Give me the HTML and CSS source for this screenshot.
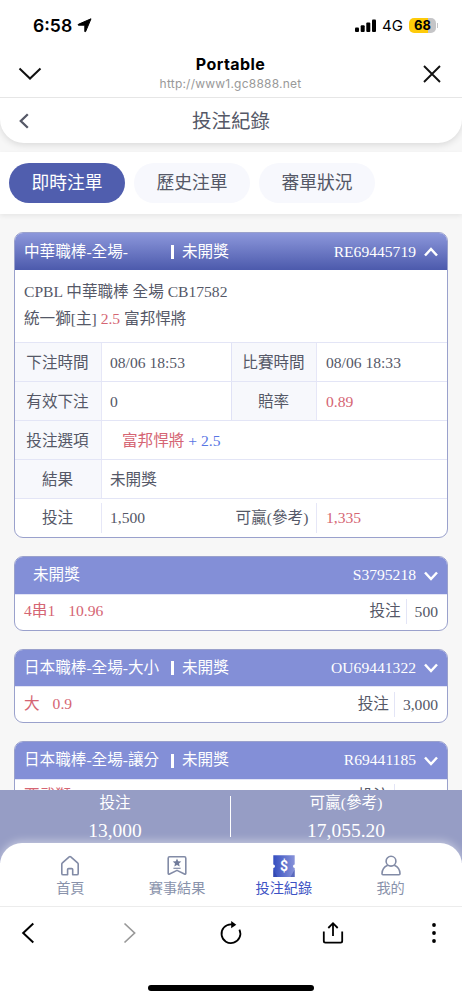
FILE: index.html
```html
<!DOCTYPE html>
<html lang="zh-Hant">
<head>
<meta charset="utf-8">
<meta name="viewport" content="width=device-width, initial-scale=1">
<title>投注紀錄</title>
<link rel="stylesheet" href="styles.css">
</head>
<body>
<div class="screen">
  <div class="status">
    <div class="status-time">6:58
      <svg width="15" height="15" viewBox="0 0 15 15"><path d="M14 .8 8.6 13.6Q8.2 14.3 7.8 13.5V7.2H1.5Q.4 6.9 1.4 6.3Z" fill="#000" stroke="#000" stroke-width="1" stroke-linejoin="round"/></svg>
    </div>
    <div class="status-right">
      <svg width="22" height="14" viewBox="0 0 22 14"><rect x="0" y="8.5" width="4" height="4.5" rx="1"/><rect x="5.7" y="6.2" width="4" height="6.8" rx="1"/><rect x="11.3" y="3.5" width="4" height="9.5" rx="1"/><rect x="17" y="0.5" width="4" height="12.5" rx="1"/></svg>
      <span class="network">4G</span>
      <span class="battery">68</span><span class="battery-tip"></span>
    </div>
  </div>

  <div class="browser-head">
    <svg width="24" height="14" viewBox="0 0 24 14"><path d="M1.5 1.5 12 11.5 22.5 1.5" fill="none" stroke="#111" stroke-width="2"/></svg>
    <div class="site">
      <div class="site-name">Portable</div>
      <div class="site-url">http://www1.gc8888.net</div>
    </div>
    <svg width="18" height="18" viewBox="0 0 18 18"><path d="M1 1 17 17M17 1 1 17" fill="none" stroke="#111" stroke-width="1.9"/></svg>
  </div>

  <div class="page">
    <header class="page-head">
      <svg class="back" width="10" height="16" viewBox="0 0 10 16"><path d="M8.8 1.2 1.8 8 8.8 14.8" fill="none" stroke="#555867" stroke-width="2.3"/></svg>
      <h1>投注紀錄</h1>
    </header>

    <nav class="tabs">
      <a class="tab active">即時注單</a>
      <a class="tab">歷史注單</a>
      <a class="tab">審單狀況</a>
    </nav>

    <main class="list">
      <section class="card open">
        <div class="card-head"><span class="league">中華職棒-全場-</span><i class="bar"></i><span>未開獎</span><span class="serial">RE69445719</span>
          <svg width="14" height="10" viewBox="0 0 14 10"><path d="M1 8.5 7 2 13 8.5" fill="none" stroke="#fff" stroke-width="2.5"/></svg></div>
        <div class="match">
          <p>CPBL 中華職棒 全場 CB17582</p>
          <p>統一獅[主] <span class="red">2.5</span> 富邦悍將</p>
        </div>
        <div class="row"><span class="label">下注時間</span><span class="value half">08/06 18:53</span><span class="label second">比賽時間</span><span class="value">08/06 18:33</span></div>
        <div class="row"><span class="label">有效下注</span><span class="value half">0</span><span class="label second">賠率</span><span class="value red">0.89</span></div>
        <div class="row"><span class="label">投注選項</span><span class="value pick"><span class="red">富邦悍將</span> <span class="blue">+ 2.5</span></span></div>
        <div class="row"><span class="label">結果</span><span class="value">未開獎</span></div>
        <div class="row total"><span class="label">投注</span><span class="value half">1,500</span><span class="label second">可贏(參考)</span><span class="value red">1,335</span></div>
      </section>

      <section class="card">
        <div class="card-head"><span class="solo">未開獎</span><span class="serial">S3795218</span>
          <svg width="14" height="10" viewBox="0 0 14 10"><path d="M1 1.5 7 8 13 1.5" fill="none" stroke="#fff" stroke-width="2.5"/></svg></div>
        <div class="brief"><span class="red">4串1</span><span class="red odds">10.96</span><span class="stake">投注</span><span class="amount">500</span></div>
      </section>

      <section class="card">
        <div class="card-head"><span class="league">日本職棒-全場-大小</span><i class="bar"></i><span>未開獎</span><span class="serial">OU69441322</span>
          <svg width="14" height="10" viewBox="0 0 14 10"><path d="M1 1.5 7 8 13 1.5" fill="none" stroke="#fff" stroke-width="2.5"/></svg></div>
        <div class="brief"><span class="red">大</span><span class="red odds">0.9</span><span class="stake">投注</span><span class="amount">3,000</span></div>
      </section>

      <section class="card">
        <div class="card-head"><span class="league">日本職棒-全場-讓分</span><i class="bar"></i><span>未開獎</span><span class="serial">R69441185</span>
          <svg width="14" height="10" viewBox="0 0 14 10"><path d="M1 1.5 7 8 13 1.5" fill="none" stroke="#fff" stroke-width="2.5"/></svg></div>
        <div class="brief"><span class="red">西武獅</span><span class="red odds">0.9</span><span class="stake">投注</span><span class="amount">3,000</span></div>
      </section>
    </main>
  </div>

  <div class="summary">
    <div class="sum"><span>投注</span><b>13,000</b></div>
    <i class="sum-line"></i>
    <div class="sum"><span>可贏(參考)</span><b>17,055.20</b></div>
  </div>

  <nav class="bottom-nav">
    <a class="nav-item"><svg width="22" height="22" viewBox="0 0 22 22"><path d="M2.8 9.2Q2.8 8.4 3.4 7.9L10.2 1.8Q11 1.2 11.8 1.8L18.6 7.9Q19.2 8.4 19.2 9.2V18.4Q19.2 19.8 17.8 19.8H13.7V14.6Q13.7 13.6 12.7 13.6H9.6Q8.6 13.6 8.6 14.6V19.8H4.2Q2.8 19.8 2.8 18.4Z" fill="none" stroke="#828ba6" stroke-width="1.6" stroke-linejoin="round"/></svg>首頁</a>
    <a class="nav-item"><svg width="22" height="22" viewBox="0 0 22 22"><path d="M2.2 3.2Q2.2 1.8 3.6 1.8H18.4Q19.8 1.8 19.8 3.2V18.2Q19.8 19.7 18.4 19L11 15.4 3.6 19Q2.2 19.7 2.2 18.2Z" fill="none" stroke="#828ba6" stroke-width="1.6" stroke-linejoin="round"/><path d="M11 3.4 12.2 6.2 15.3 6.5 13 8.5 13.7 11.5 11 9.9 8.3 11.5 9 8.5 6.7 6.5 9.8 6.2Z" fill="#707b9a"/><path d="M7.4 13.3H14.6" stroke="#828ba6" stroke-width="1.2"/></svg>賽事結果</a>
    <a class="nav-item current"><svg width="22" height="22" viewBox="0 0 22 22"><defs><linearGradient id="ticket"><stop offset="0" stop-color="#354ec0"/><stop offset="1" stop-color="#8893d9"/></linearGradient></defs><path d="M.3.3H21.7V9.6A1.7 1.7 0 0 0 21.7 13V21.9H.3V13A1.7 1.7 0 0 0 .3 9.6Z" fill="url(#ticket)"/><path d="M.3 14.5 4.5 21.9H.3ZM21.7 14.5 17.5 21.9H21.7Z" fill="#2b3f9e" opacity=".45"/><text class="dollar" x="11" y="16.1" text-anchor="middle">$</text></svg>投注紀錄</a>
    <a class="nav-item"><svg width="22" height="22" viewBox="0 0 22 22"><circle cx="11" cy="6.2" r="4.9" fill="none" stroke="#828ba6" stroke-width="1.6"/><path d="M7.7 10.2Q2 12.7 2 18.8Q2 19.8 3 19.8H19Q20 19.8 20 18.8Q20 12.7 14.3 10.2" fill="none" stroke="#828ba6" stroke-width="1.6"/></svg>我的</a>
  </nav>

  <div class="toolbar">
    <svg width="24" height="24" viewBox="0 0 24 24"><path d="M17.3 2.5 7.2 12 17.3 21.5" fill="none" stroke="#000" stroke-width="2"/></svg>
    <svg width="24" height="24" viewBox="0 0 24 24"><path d="M6.5 2.5 16.6 12 6.5 21.5" fill="none" stroke="#999" stroke-width="1.7"/></svg>
    <svg width="24" height="24" viewBox="0 0 24 24"><path d="M13 3.3H12A9.4 9.4 0 1 0 20.4 8.6" fill="none" stroke="#000" stroke-width="1.8"/><path d="M12.2 0 17.3 3.7 12.2 7.3Z"/></svg>
    <svg width="24" height="24" viewBox="0 0 24 24"><path d="M2.8 10.5V20Q2.8 21.6 4.4 21.6H19.6Q21.2 21.6 21.2 20V10.5M12 15V2.5M7.3 7 12 2.2 16.7 7" fill="none" stroke="#000" stroke-width="1.8"/></svg>
    <svg width="24" height="24" viewBox="0 0 24 24"><circle cx="12" cy="4" r="1.9"/><circle cx="12" cy="12" r="1.9"/><circle cx="12" cy="20" r="1.9"/></svg>
  </div>
  <div class="home"></div>
</div>
</body>
</html>
```
FILE: styles.css
```css
* { box-sizing: border-box; }
body { margin: 0; }
h1, p { margin: 0; font-weight: 400; }
svg { display: block; flex: none; }

.screen {
  width: 462px;
  height: 1000px;
  display: flex;
  flex-direction: column;
  overflow: hidden;
  background: #fff;
  color: #555867;
  font: 15.6px/1.2 "Liberation Serif", "Noto Sans CJK TC", serif;
}

.status {
  flex: 0 0 50px;
  padding: 1px 24px 0 33px;
  display: flex;
  justify-content: space-between;
  align-items: center;
  color: #000;
  font-family: Inter, sans-serif;
}
.status-time { display: flex; align-items: center; gap: 5px; font-size: 17.6px; font-weight: 600; }
.status-right { display: flex; align-items: center; }
.network { margin-left: 5px; font-size: 15px; }
.battery {
  width: 27px;
  height: 15px;
  margin-left: 6px;
  border-radius: 5px;
  background: linear-gradient(90deg, #fecb0a 70%, #c5c5c7 70%);
  font-size: 13px;
  line-height: 15px;
  font-weight: 700;
  text-align: center;
}
.battery-tip { width: 1px; height: 5px; margin-left: 1px; background: #c5c5c7; }

.browser-head {
  flex: 0 0 48px;
  padding: 0 21px 0 18px;
  display: flex;
  align-items: center;
  justify-content: space-between;
  border-bottom: 1px solid #e6e6e6;
  color: #000;
  font-family: Inter, sans-serif;
  text-align: center;
}
.site { padding-right: 4px; }
.site-name { font-size: 16px; line-height: 19px; font-weight: 700; letter-spacing: .4px; }
.site-url { font-size: 12px; line-height: 19px; color: #999; letter-spacing: .22px; }

.page { flex: 0 0 692px; display: flex; flex-direction: column; background: #f7f7f7; overflow: hidden; }
.page-head {
  flex: 0 0 45px;
  margin-bottom: 9px;
  padding: 0 19px;
  display: flex;
  align-items: center;
  background: #fff;
  border-radius: 0 0 24px 24px;
  box-shadow: 0 2px 7px rgba(0, 0, 0, .12);
}
.page-head h1 { flex: 1; padding: 2px 10px 0 0; font-size: 19.5px; line-height: 28px; text-align: center; }

.tabs {
  position: relative;
  flex: 0 0 62px;
  padding: 0 9px;
  display: flex;
  align-items: center;
  gap: 9px;
  background: #fff;
  box-shadow: 0 2px 5px rgba(0, 0, 0, .07);
}
.tab {
  width: 116px;
  height: 40px;
  border-radius: 20px;
  background: #f7f8fd;
  font-size: 17.8px;
  line-height: 40px;
  text-align: center;
}
.tab.active { background: #505eae; color: #fff; }

.list { padding: 18px 14px 0; display: flex; flex-direction: column; gap: 18px; }
.card {
  flex: none;
  height: 74.5px;
  border: 1px solid #9aa1cc;
  border-radius: 9px;
  background: #fff;
  overflow: hidden;
}
.card.open { height: 306px; }
.card-head {
  height: 36.5px;
  padding: 1px 9px 0;
  display: flex;
  align-items: center;
  background: #838fd7;
  color: #fff;
}
.open .card-head { height: 37px; background: linear-gradient(#8c97db, #4c5aac); }
.league { width: 147px; white-space: nowrap; }
.bar { width: 3px; height: 14px; margin-right: 8px; background: #fff; }
.solo { padding-left: 9px; }
.serial { margin: 0 8px 0 auto; }

.match { height: 72px; padding: 9px 9px 0; line-height: 26.5px; }
.row { height: 39px; display: flex; line-height: 39px; border-top: 1px solid #e3e5f6; }
.label { flex: 0 0 87px; border-right: 1.5px solid #e6e7f7; background: #f7f8fc; text-align: center; padding-right: 1px; }
.value { flex: 1; padding-left: 8px; }
.half { flex: 0 0 130px; border-right: 1px solid #e0e2f6; }
.second { flex-basis: 85px; }
.second + .value { padding-left: 9px; }
.pick { padding-left: 20px; }
.total { padding: 4px 0; line-height: 30px; }
.total .label { background: none; }
.total .half { flex-basis: 120px; border: 0; }
.total .second { flex-basis: 95px; padding-left: 7px; }
.red { color: #d56573; }
.blue { color: #5876e4; }

.brief { height: 36px; padding: 0 9px 1px; display: flex; align-items: center; border-top: 1px solid #e3e5f6; }
.odds { margin-left: 13px; }
.stake { margin-left: auto; padding-right: 5px; }
.amount { padding-left: 8px; line-height: 25px; border-left: 1px solid #e3e5f6; }

.summary {
  flex: 0 0 73px;
  padding-right: 1px;
  display: flex;
  background: #969dc5;
  color: #fff;
}
.sum { flex: 1; display: flex; flex-direction: column; align-items: center; }
.sum span { line-height: 26px; }
.sum b { font-size: 19.5px; line-height: 29px; font-weight: 400; }
.sum-line { width: 1px; height: 41px; margin-top: 6px; background: #fff; }

.bottom-nav {
  position: relative;
  flex: 0 0 64px;
  margin-top: -20px;
  padding: 12px 18px 0 17px;
  display: flex;
  background: #fff;
  border-bottom: 1px solid #ececec;
  border-radius: 22px 22px 0 0;
  box-shadow: 0 -2px 8px rgba(255, 255, 255, .45);
}
.nav-item {
  flex: 1;
  display: flex;
  flex-direction: column;
  align-items: center;
  color: #8992ab;
  font-size: 14.2px;
  line-height: 22px;
}
.current { color: #3d52c4; }
.dollar { font: 700 14px Roboto, sans-serif; fill: #fff; }

.toolbar {
  flex: 0 0 52px;
  padding: 0 16px;
  display: flex;
  align-items: center;
  justify-content: space-between;
}
.home { flex: none; width: 166px; height: 6px; margin: 26px auto 0; border-radius: 3px; background: #000; }
```
